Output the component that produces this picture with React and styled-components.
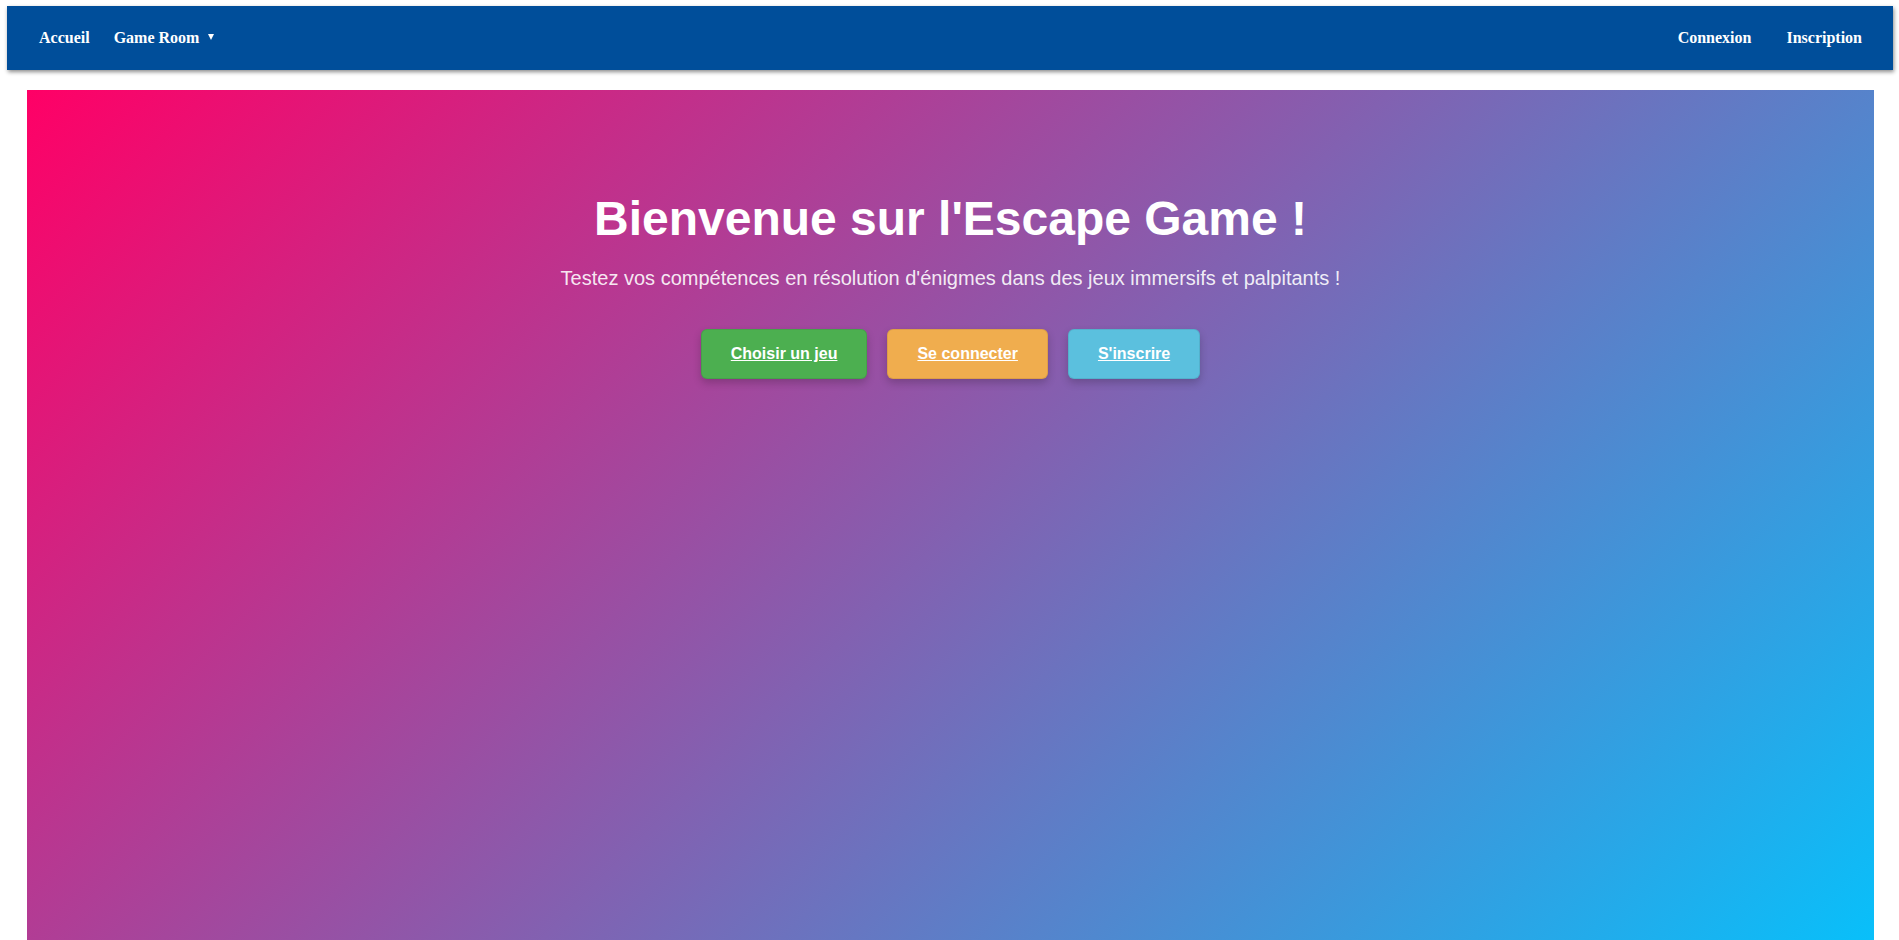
import React from "react";
import styled, { createGlobalStyle } from "styled-components";

const GlobalStyle = createGlobalStyle`
  html, body {
    margin: 0;
    padding: 0;
    background: #fff;
  }
  body {
    font-family: "Liberation Sans", Arial, sans-serif;
  }
`;

const buttonColors = {
  green: "#4caf50",
  orange: "#f0ad4e",
  blue: "#5bc0de",
};

export default function App() {
  return (
    <>
      <GlobalStyle />
      <Page>
        <Navbar>
          <NavGroup>
            <NavLink href="#">Accueil</NavLink>
            <NavLink href="#">
              Game Room
              <Caret />
            </NavLink>
          </NavGroup>
          <NavGroup right>
            <NavLink href="#">Connexion</NavLink>
            <NavLink href="#">Inscription</NavLink>
          </NavGroup>
        </Navbar>
        <Hero>
          <Title>Bienvenue sur l'Escape Game !</Title>
          <Subtitle>
            Testez vos compétences en résolution d'énigmes dans des jeux
            immersifs et palpitants !
          </Subtitle>
          <Actions>
            <ActionButton href="#" color="green">
              Choisir un jeu
            </ActionButton>
            <ActionButton href="#" color="orange">
              Se connecter
            </ActionButton>
            <ActionButton href="#" color="blue">
              S'inscrire
            </ActionButton>
          </Actions>
        </Hero>
      </Page>
    </>
  );
}

const Page = styled.div`
  padding: 6px 6px 0 7px;
`;

const Navbar = styled.nav`
  height: 64px;
  background-color: #004e9a;
  box-shadow: 1px 2px 4px rgba(0, 0, 0, 0.45);
  display: flex;
  align-items: center;
  justify-content: space-between;
  padding: 0 31px 0 32px;
`;

const NavGroup = styled.div`
  display: flex;
  align-items: center;
  gap: ${(p) => (p.right ? "35px" : "24px")};
`;

const NavLink = styled.a`
  font-family: "Liberation Serif", "Times New Roman", serif;
  font-weight: bold;
  font-size: 16px;
  color: #fff;
  text-decoration: none;
  display: flex;
  align-items: center;
`;

const Caret = styled.span`
  display: inline-block;
  margin-left: 9px;
  width: 0;
  height: 0;
  border-left: 3.5px solid transparent;
  border-right: 3.5px solid transparent;
  border-top: 6px solid #fff;
  margin-top: -2px;
`;

const Hero = styled.section`
  margin: 20px 19px 0 20px;
  height: 940px;
  box-sizing: border-box;
  padding-top: 101px;
  background: linear-gradient(135deg, #ff0066, #00c6ff);
  display: flex;
  flex-direction: column;
  align-items: center;
  color: #fff;
`;

const Title = styled.h1`
  margin: 0;
  font-size: 48px;
  line-height: 55px;
  font-weight: bold;
`;

const Subtitle = styled.p`
  margin: 21px 0 0;
  font-size: 20px;
  line-height: 23px;
  color: rgba(255, 255, 255, 0.9);
`;

const Actions = styled.div`
  margin-top: 39px;
  display: flex;
  gap: 20px;
`;

const ActionButton = styled.a`
  height: 50px;
  box-sizing: border-box;
  padding: 0 29px;
  display: inline-flex;
  align-items: center;
  border-radius: 6px;
  border: 1px solid rgba(0, 0, 0, 0.08);
  background-color: ${(p) => buttonColors[p.color]};
  color: #fff;
  font-weight: bold;
  font-size: 16px;
  text-decoration: underline;
  box-shadow: 0 4px 8px rgba(0, 0, 0, 0.2);
`;
